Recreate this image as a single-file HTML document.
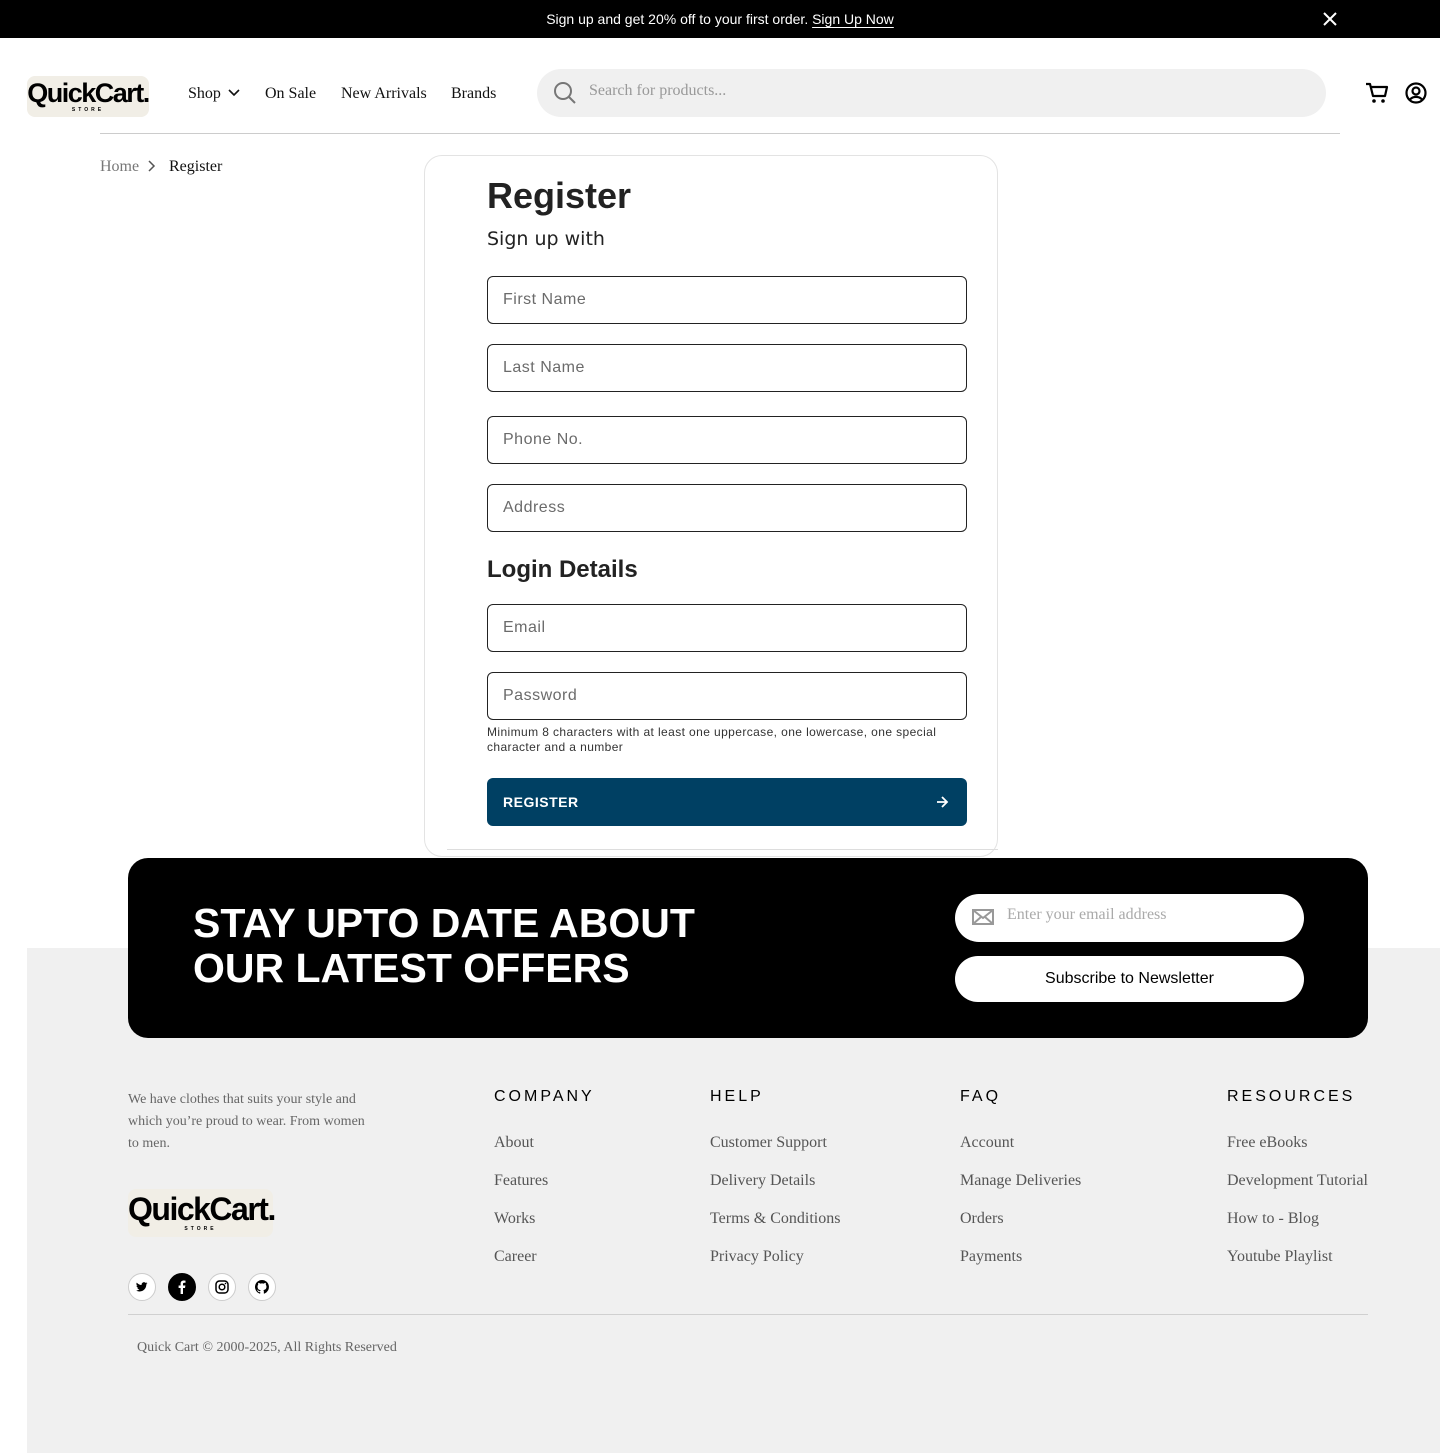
<!DOCTYPE html>
<html><head><meta charset="utf-8"><style>
*{margin:0;padding:0;box-sizing:border-box}
body{width:1440px;height:1453px;position:relative;background:#fff;font-family:"Liberation Sans",sans-serif;overflow:hidden}
.a{position:absolute}
.serif{font-family:"Liberation Serif",serif}
.top{left:0;top:0;width:1440px;height:38px;background:#000;color:#fff;font-size:14px;text-align:center;line-height:38px}
.top u{text-underline-offset:3px}
.logo{background:#f1eee6;border-radius:8px;font-weight:900;font-family:"Liberation Sans",sans-serif;color:#000;text-align:center;letter-spacing:-1.5px}
.logo small{display:block;font-size:5px;letter-spacing:3px;font-weight:700;line-height:6px;margin-top:-3px}
.nav{top:85px;font-size:16px;color:#111}
.inp{left:487px;width:480px;height:48px;border:1px solid #222;border-radius:6px;font-size:16px;color:#6b6b6b;padding-left:15px;line-height:46px;letter-spacing:.5px}
.fh{font-size:16px;letter-spacing:3px;color:#000;top:1088px}
.fl{font-size:16px;color:#555;font-family:"Liberation Serif",serif}
.soc{top:1273px;width:28px;height:28px;border-radius:50%;border:1px solid #ccc;background:#fff;display:flex;align-items:center;justify-content:center}
</style></head><body>
<div class="a top">Sign up and get 20% off to your first order. <u>Sign Up Now</u></div>
<svg class="a" style="left:1322px;top:11px" width="16" height="16" viewBox="0 0 16 16"><path d="M2 2L14 14M14 2L2 14" stroke="#fff" stroke-width="2"/></svg>

<div class="a logo" style="left:27px;top:76px;width:122px;height:41px;font-size:27px;line-height:34px">QuickCart.<small>STORE</small></div>
<div class="a nav serif" style="left:188px">Shop <svg width="14" height="10" viewBox="0 0 14 10" style="margin-left:2px"><path d="M2 2l5 5 5-5" stroke="#111" stroke-width="1.6" fill="none"/></svg></div>
<div class="a nav serif" style="left:265px">On Sale</div>
<div class="a nav serif" style="left:341px">New Arrivals</div>
<div class="a nav serif" style="left:451px">Brands</div>
<div class="a" style="left:537px;top:69px;width:789px;height:48px;background:#f0f0f0;border-radius:24px"></div>
<svg class="a" style="left:553px;top:81px" width="24" height="24" viewBox="0 0 24 24"><circle cx="10" cy="10" r="8" stroke="#777" stroke-width="2" fill="none"/><path d="M16 16l6 6" stroke="#777" stroke-width="2"/></svg>
<div class="a serif" style="left:589px;top:82px;font-size:16px;color:#999">Search for products...</div>
<svg class="a" style="left:1365px;top:82px" width="24" height="22" viewBox="0 0 24 22"><path d="M1 2h4l3 12h12l2-9H6" stroke="#000" stroke-width="2.2" fill="none" stroke-linejoin="round"/><circle cx="9" cy="19" r="1.8"/><circle cx="18" cy="19" r="1.8"/></svg>
<svg class="a" style="left:1405px;top:82px" width="22" height="22" viewBox="0 0 22 22"><circle cx="11" cy="11" r="9.5" stroke="#000" stroke-width="2.2" fill="none"/><circle cx="11" cy="9" r="3.5" stroke="#000" stroke-width="2.2" fill="none"/><path d="M5 17.5c3-3.5 9-3.5 12 0" stroke="#000" stroke-width="2.2" fill="none"/></svg>
<div class="a" style="left:100px;top:133px;width:1240px;height:1px;background:#ccc"></div>

<div class="a serif" style="left:100px;top:158px;font-size:16px;color:#777">Home</div>
<svg class="a" style="left:146px;top:159px" width="12" height="14" viewBox="0 0 12 14"><path d="M3 2l5 5-5 5" stroke="#555" stroke-width="1.5" fill="none"/></svg>
<div class="a serif" style="left:169px;top:158px;font-size:16px;color:#111">Register</div>

<div class="a" style="left:424px;top:155px;width:574px;height:702px;border:1px solid #e3e3e3;border-radius:18px"></div>
<div class="a" style="left:447px;top:849px;width:551px;height:1px;background:#ddd"></div>
<div class="a" style="left:487px;top:175px;font-size:36px;font-weight:700;color:#222">Register</div>
<div class="a" style="left:487px;top:228px;font-size:19px;color:#222;font-family:'DejaVu Sans',sans-serif">Sign up with</div>
<div class="a inp" style="top:276px">First Name</div>
<div class="a inp" style="top:344px">Last Name</div>
<div class="a inp" style="top:416px">Phone No.</div>
<div class="a inp" style="top:484px">Address</div>
<div class="a" style="left:487px;top:556px;font-size:24px;font-weight:700;color:#222">Login Details</div>
<div class="a inp" style="top:604px">Email</div>
<div class="a inp" style="top:672px">Password</div>
<div class="a" style="left:487px;top:725px;width:490px;font-size:12px;color:#333;line-height:15px;letter-spacing:.4px">Minimum 8 characters with at least one uppercase, one lowercase, one special character and a number</div>
<div class="a" style="left:487px;top:778px;width:480px;height:48px;background:#004063;border-radius:6px;color:#fff;font-size:14px;font-weight:700;line-height:48px;padding-left:16px;letter-spacing:.5px">REGISTER</div>
<svg class="a" style="left:935px;top:795px" width="14" height="14" viewBox="0 0 14 14"><path d="M2 7h10M7 2l5 5-5 5" stroke="#fff" stroke-width="1.8" fill="none"/></svg>

<div class="a" style="left:27px;top:948px;width:1413px;height:505px;background:#f0f0f0"></div>
<div class="a" style="left:128px;top:858px;width:1240px;height:180px;background:#000;border-radius:20px"></div>
<div class="a" style="left:193px;top:901px;font-size:41px;font-weight:700;color:#fff;line-height:45px">STAY UPTO DATE ABOUT<br>OUR LATEST OFFERS</div>
<div class="a" style="left:955px;top:894px;width:349px;height:48px;background:#fff;border-radius:24px"></div>
<svg class="a" style="left:972px;top:908px" width="22" height="18" viewBox="0 0 22 18"><rect x="1" y="2" width="20" height="14" fill="none" stroke="#999" stroke-width="2"/><path d="M1 2l10 8 10-8M1 16l8-7M21 16l-8-7" stroke="#999" stroke-width="2" fill="none"/></svg>
<div class="a serif" style="left:1007px;top:906px;font-size:16px;color:#aaa">Enter your email address</div>
<div class="a" style="left:955px;top:956px;width:349px;height:46px;background:#fff;border-radius:23px;text-align:center;line-height:46px;font-size:16px;color:#000">Subscribe to Newsletter</div>

<div class="a serif" style="left:128px;top:1089px;width:250px;font-size:14px;line-height:22px;color:#666">We have clothes that suits your style and which you’re proud to wear. From women to men.</div>
<div class="a logo" style="left:128px;top:1189px;width:145px;height:48px;font-size:32px;line-height:40px">QuickCart.<small>STORE</small></div>
<div class="a soc" style="left:128px"><svg width="12" height="12" viewBox="0 0 24 24"><path d="M23 4.5a9 9 0 01-2.7.8 4.7 4.7 0 002-2.6 9.4 9.4 0 01-3 1.1 4.7 4.7 0 00-8 4.300A13.3 13.3 0 011.6 3.2a4.7 4.7 0 001.5 6.3 4.7 4.7 0 01-2.1-.6 4.7 4.7 0 003.7 4.6 4.7 4.7 0 01-2.1.1 4.7 4.7 0 004.4 3.2A9.4 9.4 0 010 18.8 13.3 13.3 0 007.2 21c8.6 0 13.4-7.2 13.4-13.4v-.6A9.5 9.5 0 0023 4.5z"/></svg></div>
<div class="a soc" style="left:168px;background:#000;border-color:#000"><svg width="8" height="14" viewBox="0 0 8 14"><path d="M5 14V8h2l.4-2.5H5V4c0-.7.3-1.2 1.3-1.2H7.5V.6A15 15 0 005.7.5C3.9.5 2.600 1.6 2.6 3.6v1.9H.6V8h2v6z" fill="#fff"/></svg></div>
<div class="a soc" style="left:208px"><svg width="14" height="14" viewBox="0 0 14 14"><rect x="1" y="1" width="12" height="12" rx="3.5" fill="none" stroke="#000" stroke-width="1.5"/><circle cx="7" cy="7" r="2.8" fill="none" stroke="#000" stroke-width="1.5"/><circle cx="10.5" cy="3.5" r=".8"/></svg></div>
<div class="a soc" style="left:248px"><svg width="14" height="14" viewBox="0 0 16 16"><path d="M8 0a8 8 0 00-2.5 15.6c.4 0 .5-.2.5-.4v-1.4c-2.2.5-2.7-1-2.7-1-.4-.9-.9-1.2-.9-1.2-.7-.5.1-.5.1-.5.8.1 1.2.8 1.2.8.7 1.2 1.9.9 2.3.7.1-.5.3-.9.5-1.1-1.8-.2-3.6-.9-3.6-4 0-.9.3-1.6.8-2.1-.1-.2-.4-1 .1-2.1 0 0 .7-.2 2.2.8a7.5 7.5 0 014 0c1.5-1 2.2-.8 2.2-.8.4 1.1.2 1.9.1 2.1.5.6.8 1.3.8 2.1 0 3.1-1.9 3.7-3.6 3.9.3.3.6.8.6 1.5v2.2c0 .2.1.5.6.4A8 8 0 008 0z"/></svg></div>

<div class="a fh" style="left:494px">COMPANY</div>
<div class="a fh" style="left:710px">HELP</div>
<div class="a fh" style="left:960px">FAQ</div>
<div class="a fh" style="left:1227px">RESOURCES</div>
<div class="a fl" style="left:494px;top:1124px;line-height:38px">About<br>Features<br>Works<br>Career</div>
<div class="a fl" style="left:710px;top:1124px;line-height:38px">Customer Support<br>Delivery Details<br>Terms &amp; Conditions<br>Privacy Policy</div>
<div class="a fl" style="left:960px;top:1124px;line-height:38px">Account<br>Manage Deliveries<br>Orders<br>Payments</div>
<div class="a fl" style="left:1227px;top:1124px;line-height:38px">Free eBooks<br>Development Tutorial<br>How to - Blog<br>Youtube Playlist</div>
<div class="a" style="left:128px;top:1314px;width:1240px;height:1px;background:#d0d0d0"></div>
<div class="a serif" style="left:137px;top:1340px;font-size:14px;color:#666">Quick Cart © 2000-2025, All Rights Reserved</div>
</body></html>
